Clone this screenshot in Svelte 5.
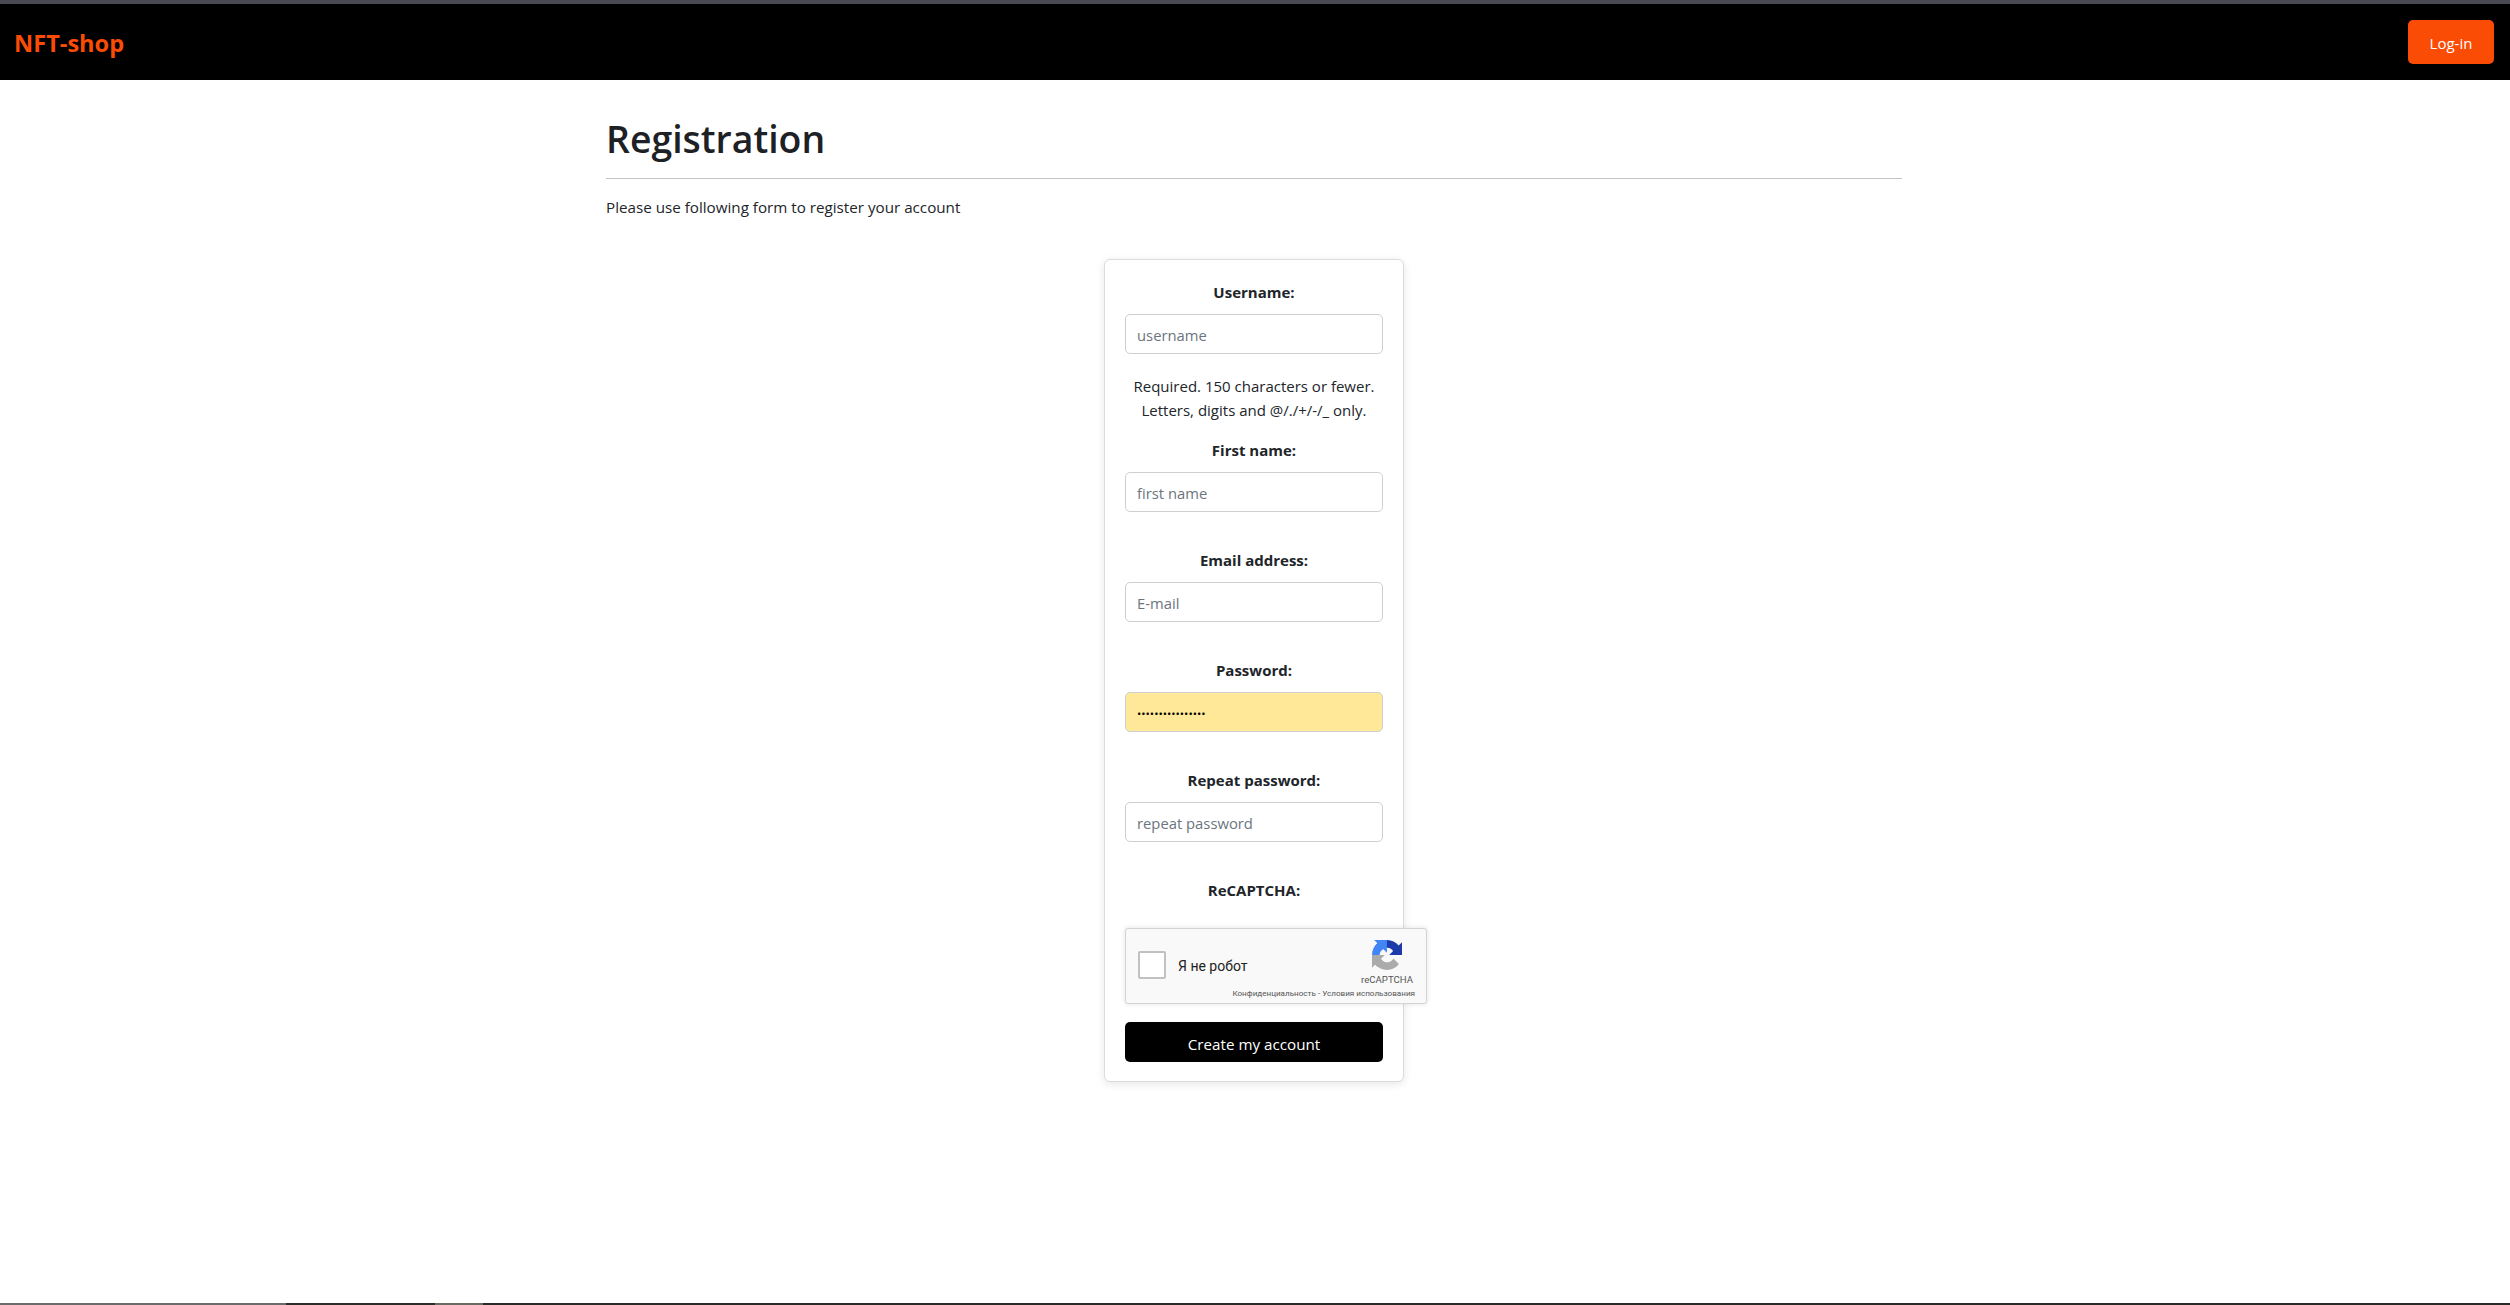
<script>
  const fields = [
    { label: "Username:", placeholder: "username", help: ["Required. 150 characters or fewer.", "Letters, digits and @/./+/-/_ only."] },
    { label: "First name:", placeholder: "first name" },
    { label: "Email address:", placeholder: "E-mail" },
    { label: "Password:", type: "password", value: "password12345678", filled: true },
    { label: "Repeat password:", placeholder: "repeat password", type: "password" },
  ];
</script>

<div class="strip"></div>
<nav class="navbar">
  <span class="brand">NFT-shop</span>
  <button class="login">Log-in</button>
</nav>

<main class="container">
  <h1>Registration</h1>
  <hr />
  <p class="lead">Please use following form to register your account</p>

  <form class="card">
    {#each fields as f}
      <div class="group">
        <label for={f.label}>{f.label}</label>
        <input id={f.label} class:filled={f.filled} type={f.type ?? "text"} placeholder={f.placeholder} value={f.value ?? ""} />
        {#if f.help}
          <div class="help">
            {#each f.help as line}<div>{line}</div>{/each}
          </div>
        {:else}
          <div class="nohelp"></div>
        {/if}
      </div>
    {/each}

    <div class="cap-label">ReCAPTCHA:</div>
    <div class="captcha">
      <span class="box"></span>
      <span class="robot">Я не робот</span>
      <div class="badge">
        <svg viewBox="0 0 64 64" width="30" height="30">
          <path d="M64 31.955l-.033-1.37V4.687l-7.16 7.16C50.948 4.674 42.033.093 32.05.093c-10.4 0-19.622 4.96-25.458 12.64l11.736 11.86a15.55 15.55 0 0 1 4.754-5.334c2.05-1.6 4.952-2.906 8.968-2.906.485 0 .86.057 1.135.163 4.976.393 9.288 3.14 11.828 7.124l-8.307 8.307 26.2.001" fill="#1c3aa9" />
          <path d="M31.862 0l-1.37.033H4.594l7.16 7.16C4.58 13.052 0 21.967 0 31.95c0 10.4 4.96 19.622 12.64 25.458l11.86-11.736a15.55 15.55 0 0 1-5.334-4.754c-1.6-2.05-2.906-4.952-2.906-8.968 0-.485.057-.86.163-1.135.393-4.976 3.14-9.288 7.124-11.828l8.307 8.307L31.862 0" fill="#4285f4" />
          <path d="M.001 31.955l.033 1.37v25.9l7.16-7.16c5.86 7.173 14.774 11.754 24.757 11.754 10.4 0 19.622-4.96 25.458-12.64l-11.736-11.86a15.55 15.55 0 0 1-4.754 5.334c-2.05 1.6-4.952 2.906-8.968 2.906-.485 0-.86-.057-1.135-.163-4.976-.393-9.288-3.14-11.828-7.124l8.307-8.307-26.2-.001" fill="#ababab" />
        </svg>
        <span class="rc">reCAPTCHA</span>
      </div>
      <span class="terms">Конфиденциальность - Условия использования</span>
    </div>
    <button class="submit" type="button">Create my account</button>
  </form>
</main>

<div class="bottom"><i class="b1"></i><i class="b2"></i><i class="b3"></i><i class="b4"></i></div>

<style>
  :global(body) {
    margin: 0;
    background: #fff;
    font-family: "Open Sans", "Noto Sans", sans-serif;
    font-size: 15px;
    line-height: 24px;
    color: #212529;
    height: 1305px;
    overflow: hidden;
    position: relative;
  }
  .strip { height: 4px; background: #4a4a54; }
  .navbar {
    height: 76px;
    background: #000;
    display: flex;
    align-items: center;
    justify-content: space-between;
    padding: 0 16px 0 14px;
  }
  .brand { color: #fa4c05; font-weight: 700; font-size: 23.6px; position: relative; top: 1px; }
  .login {
    width: 86px;
    height: 44px;
    padding: 2px 0 0;
    background: #fa4c05;
    color: #fff;
    border: 0;
    border-radius: 5px;
    font: inherit;
  }
  .container { width: 1296px; margin-left: 606px; }
  h1 { margin: 0; padding-top: 36px; font-size: 37.4px; font-weight: 600; line-height: 46px; color: #1d2024; }
  hr { margin: 16px 0 0; border: 0; border-top: 1px solid #c4c4c4; }
  .lead { margin: 16px 0 0; font-size: 15.2px; }
  .card {
    box-sizing: border-box;
    width: 300px;
    height: 823px;
    margin: 40px 0 0 498px;
    padding: 20px;
    background: #fff;
    border: 1px solid #dcdcdc;
    border-radius: 6px;
    box-shadow: 0 2px 8px rgba(0, 0, 0, 0.1);
    text-align: center;
  }
  label, .cap-label { display: block; font-weight: 700; font-size: 15px; height: 24px; color: #212529; }
  label { margin-bottom: 10px; }
  input {
    display: block;
    box-sizing: border-box;
    width: 258px;
    height: 40px;
    padding: 2px 11px 0;
    border: 1px solid #cfcfcf;
    border-radius: 5px;
    font: inherit;
    font-size: 14.8px;
    color: #000;
    background: #fff;
    outline: none;
  }
  input::placeholder { color: #6c757d; opacity: 1; }
  input.filled { background: #ffe998; font-size: 11.4px; }
  .help { padding: 20px 0 16px; }
  .nohelp { height: 36px; }
  .cap-label { margin-bottom: 26px; }
  .captcha {
    position: relative;
    box-sizing: border-box;
    width: 302px;
    height: 76px;
    background: #f9f9f9;
    border: 1px solid #d3d3d3;
    border-radius: 3px;
    box-shadow: 0 0 4px 1px rgba(0, 0, 0, 0.08);
    text-align: left;
    font-family: Roboto, sans-serif;
  }
  .box {
    position: absolute;
    left: 12px;
    top: 22px;
    width: 28px;
    height: 28px;
    box-sizing: border-box;
    background: #fff;
    border: 2px solid #c1c1c1;
    border-radius: 2px;
  }
  .robot { position: absolute; left: 52px; top: 26px; font-size: 14px; line-height: 22px; color: #222; }
  .badge {
    position: absolute;
    right: 11px;
    top: 11px;
    width: 56px;
    display: flex;
    flex-direction: column;
    align-items: center;
  }
  .rc { font-size: 9.6px; line-height: 12px; margin-top: 4px; color: #555; }
  .terms { position: absolute; right: 11px; top: 59px; font-size: 8.1px; line-height: 11px; color: #555; white-space: nowrap; }
  .submit {
    display: block;
    width: 258px;
    height: 40px;
    margin-top: 18px;
    padding: 3px 0 0;
    background: #000;
    color: #fff;
    border: 0;
    border-radius: 5px;
    font: inherit;
    font-size: 15.2px;
  }
  .bottom { position: absolute; left: 0; right: 0; bottom: 0; height: 2px; display: flex; }
  .bottom i { display: block; height: 2px; }
  .b1 { width: 286px; background: #6b6b6b; }
  .b2 { width: 149px; background: #2c2c28; }
  .b3 { width: 48px; background: #6a6a62; }
  .b4 { flex: 1; background: #2a2a26; }
</style>
